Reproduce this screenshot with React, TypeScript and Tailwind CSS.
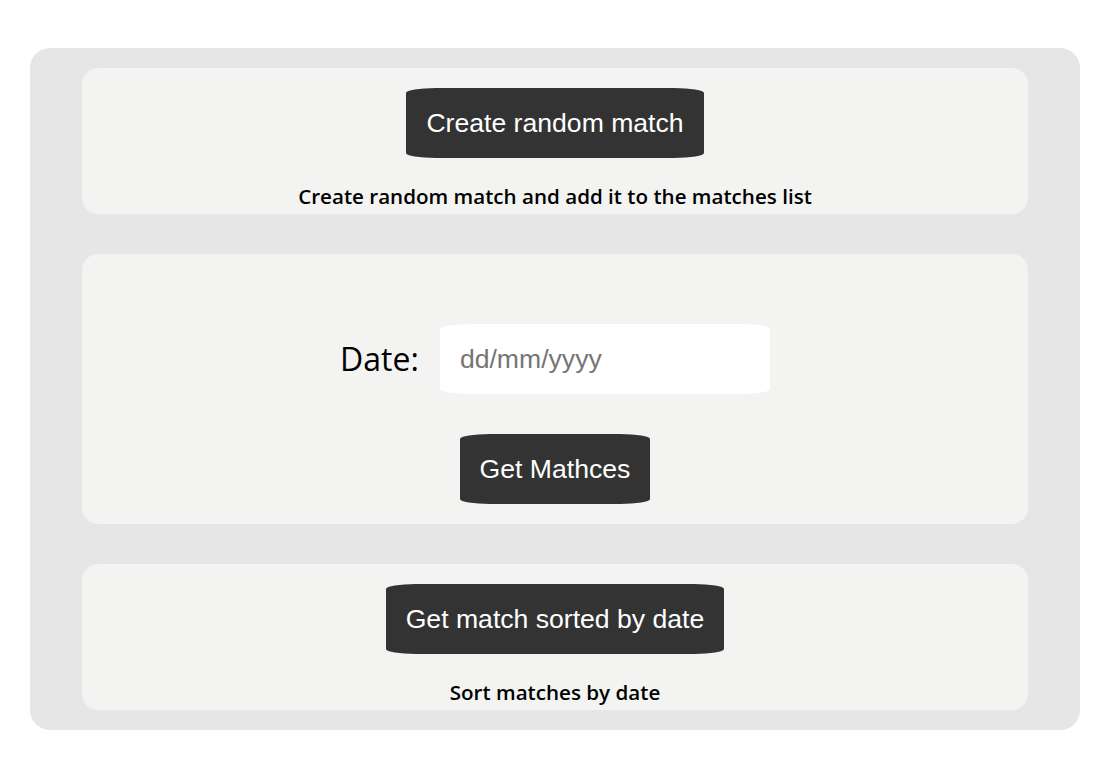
import React from "react";

const btn =
  "bg-[#333333] text-white h-[70px] px-5 rounded-[30px/5px] text-[26.6px] leading-none [font-family:'Liberation_Sans',Arial,sans-serif]";

export default function App() {
  return (
    <div className="w-[1100px] h-[768px] bg-white pt-12 pl-[30px]">
      <div className="w-[1050px] bg-[#e6e6e6] rounded-[20px] px-[52px] py-5 flex flex-col gap-10">
        <div className="bg-[#f3f3f2] rounded-[16px] h-[146px] flex flex-col items-center pt-5">
          <button className={btn}>Create random match</button>
          <p className="mt-6 text-[20.6px] leading-[28px] font-semibold text-black [font-family:'Open_Sans',sans-serif]">
            Create random match and add it to the matches list
          </p>
        </div>
        <div className="bg-[#f3f3f2] rounded-[16px] h-[270px] flex flex-col items-center pt-[70px]">
          <div className="flex items-center gap-[21px]">
            <span className="text-[32px] leading-none text-black [font-family:'Open_Sans',sans-serif]">Date:</span>
            <input
              type="text"
              placeholder="dd/mm/yyyy"
              className="w-[330px] h-[70px] bg-white rounded-[30px/5px] px-5 text-[26.6px] outline-none placeholder:text-[#757575] [font-family:'Liberation_Sans',Arial,sans-serif]"
            />
          </div>
          <button className={btn + " mt-10"}>Get Mathces</button>
        </div>
        <div className="bg-[#f3f3f2] rounded-[16px] h-[146px] flex flex-col items-center pt-5">
          <button className={btn}>Get match sorted by date</button>
          <p className="mt-6 text-[20.6px] leading-[28px] font-semibold text-black [font-family:'Open_Sans',sans-serif]">
            Sort matches by date
          </p>
        </div>
      </div>
    </div>
  );
}
